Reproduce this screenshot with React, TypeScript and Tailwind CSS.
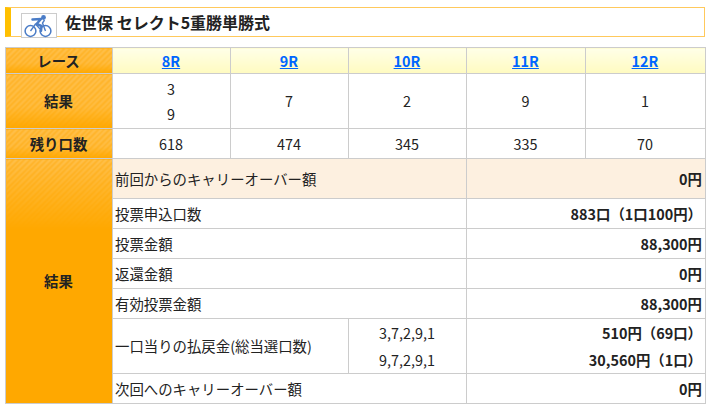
const stripeHead =
  "bg-[linear-gradient(180deg,rgba(255,168,0,0)_0%,rgba(255,168,0,0.15)_60%,#ffa800_100%),repeating-linear-gradient(135deg,#ffb52e_0px,#ffb52e_2px,#ffbf4a_2px,#ffbf4a_4px)]";
const stripeTall =
  "bg-[linear-gradient(180deg,rgba(255,168,0,0)_0px,#ffa800_70px),repeating-linear-gradient(135deg,#ffb52e_0px,#ffb52e_2px,#ffbf4a_2px,#ffbf4a_4px)]";
const th = "border border-[#cccccc] text-center font-bold text-[#222222] p-0 pr-[1px]";
const td = "border border-[#cccccc] text-center p-0 pr-[1px]";
const label = "border border-[#cccccc] text-left p-0 pl-[2px]";
const amount = "border border-[#cccccc] text-right font-bold p-0 pr-[3px]";

const races = ["8R", "9R", "10R", "11R", "12R"];
const rest = [618, 474, 345, 335, 70];

function BikeIcon() {
  return (
    <svg width="30" height="24" viewBox="0 0 30 24" fill="none" stroke="#4a7cc7">
      <circle cx="6.5" cy="17" r="5.4" strokeWidth="1.5" />
      <circle cx="21.5" cy="17" r="5.4" strokeWidth="1.5" />
      <path d="M6.5 17 L11.5 10 L16 15" strokeWidth="1.3" strokeLinejoin="round" />
      <path d="M8.5 5.5 L17 5 L12.5 10 L17.5 12 L17 17" strokeWidth="2.5" strokeLinecap="round" strokeLinejoin="round" />
      <path d="M21.5 17 L18.5 9 L20.5 6" strokeWidth="1.4" />
      <circle cx="19.5" cy="3.5" r="2.4" fill="#4a7cc7" stroke="none" />
    </svg>
  );
}

export default function App() {
  return (
    <div className="w-[710px] h-[410px] overflow-hidden bg-white px-[5px] pt-[7px] text-[14.4px] text-[#222222] font-['Noto_Sans_CJK_JP','Noto_Sans',sans-serif]">
      <div className="flex items-center h-[30px] border border-[#ffc95c] border-l-[6px] border-l-[#ffc000]">
        <div className="flex items-center justify-center w-[36px] h-[25px] ml-[10px] mt-[7px] border border-[#cccccc] bg-white">
          <BikeIcon />
        </div>
        <h1 className="ml-[8px] text-[16px] font-bold text-[#222222]">佐世保 セレクト5重勝単勝式</h1>
      </div>

      <table className="mt-[10px] w-[700px] table-fixed border-collapse">
        <colgroup>
          <col className="w-[107px]" />
          <col className="w-[118px]" />
          <col className="w-[118px]" />
          <col className="w-[118px]" />
          <col className="w-[119px]" />
          <col className="w-[120px]" />
        </colgroup>
        <tbody>
          <tr className="h-[26px]">
            <th className={`${th} ${stripeHead}`}>レース</th>
            {races.map((r) => (
              <td key={r} className={`${td} bg-[linear-gradient(180deg,#ffffe8,#fffbc0)] font-bold`}>
                <a href="#" className="text-[#0066ff] underline">{r}</a>
              </td>
            ))}
          </tr>
          <tr className="h-[55px]">
            <th className={`${th} ${stripeHead}`}>結果</th>
            <td className={td}>
              <div className="h-[26px] leading-[28px]">3</div>
              <div className="h-[26px] leading-[26px]">9</div>
            </td>
            <td className={td}>7</td>
            <td className={td}>2</td>
            <td className={td}>9</td>
            <td className={td}>1</td>
          </tr>
          <tr className="h-[30px]">
            <th className={`${th} ${stripeHead}`}>残り口数</th>
            {rest.map((n) => (
              <td key={n} className={td}>{n}</td>
            ))}
          </tr>
          <tr className="h-[40px] bg-[#fdf0e0]">
            <th rowSpan={8} className={`${th} ${stripeTall}`}>結果</th>
            <td colSpan={3} className={label}>前回からのキャリーオーバー額</td>
            <td colSpan={2} className={amount}>0円</td>
          </tr>
          <tr className="h-[30px]">
            <td colSpan={3} className={label}>投票申込口数</td>
            <td colSpan={2} className={amount}>883口（1口100円）</td>
          </tr>
          <tr className="h-[30px]">
            <td colSpan={3} className={label}>投票金額</td>
            <td colSpan={2} className={amount}>88,300円</td>
          </tr>
          <tr className="h-[30px]">
            <td colSpan={3} className={label}>返還金額</td>
            <td colSpan={2} className={amount}>0円</td>
          </tr>
          <tr className="h-[30px]">
            <td colSpan={3} className={label}>有効投票金額</td>
            <td colSpan={2} className={amount}>88,300円</td>
          </tr>
          <tr className="h-[28px]">
            <td colSpan={2} rowSpan={2} className={label}>一口当りの払戻金(総当選口数)</td>
            <td className={`${td} border-b-0`}>3,7,2,9,1</td>
            <td colSpan={2} className={`${amount} border-b-0`}>510円（69口）</td>
          </tr>
          <tr className="h-[27px]">
            <td className={`${td} border-t-0`}>9,7,2,9,1</td>
            <td colSpan={2} className={`${amount} border-t-0`}>30,560円（1口）</td>
          </tr>
          <tr className="h-[30px]">
            <td colSpan={3} className={label}>次回へのキャリーオーバー額</td>
            <td colSpan={2} className={amount}>0円</td>
          </tr>
        </tbody>
      </table>
    </div>
  );
}
